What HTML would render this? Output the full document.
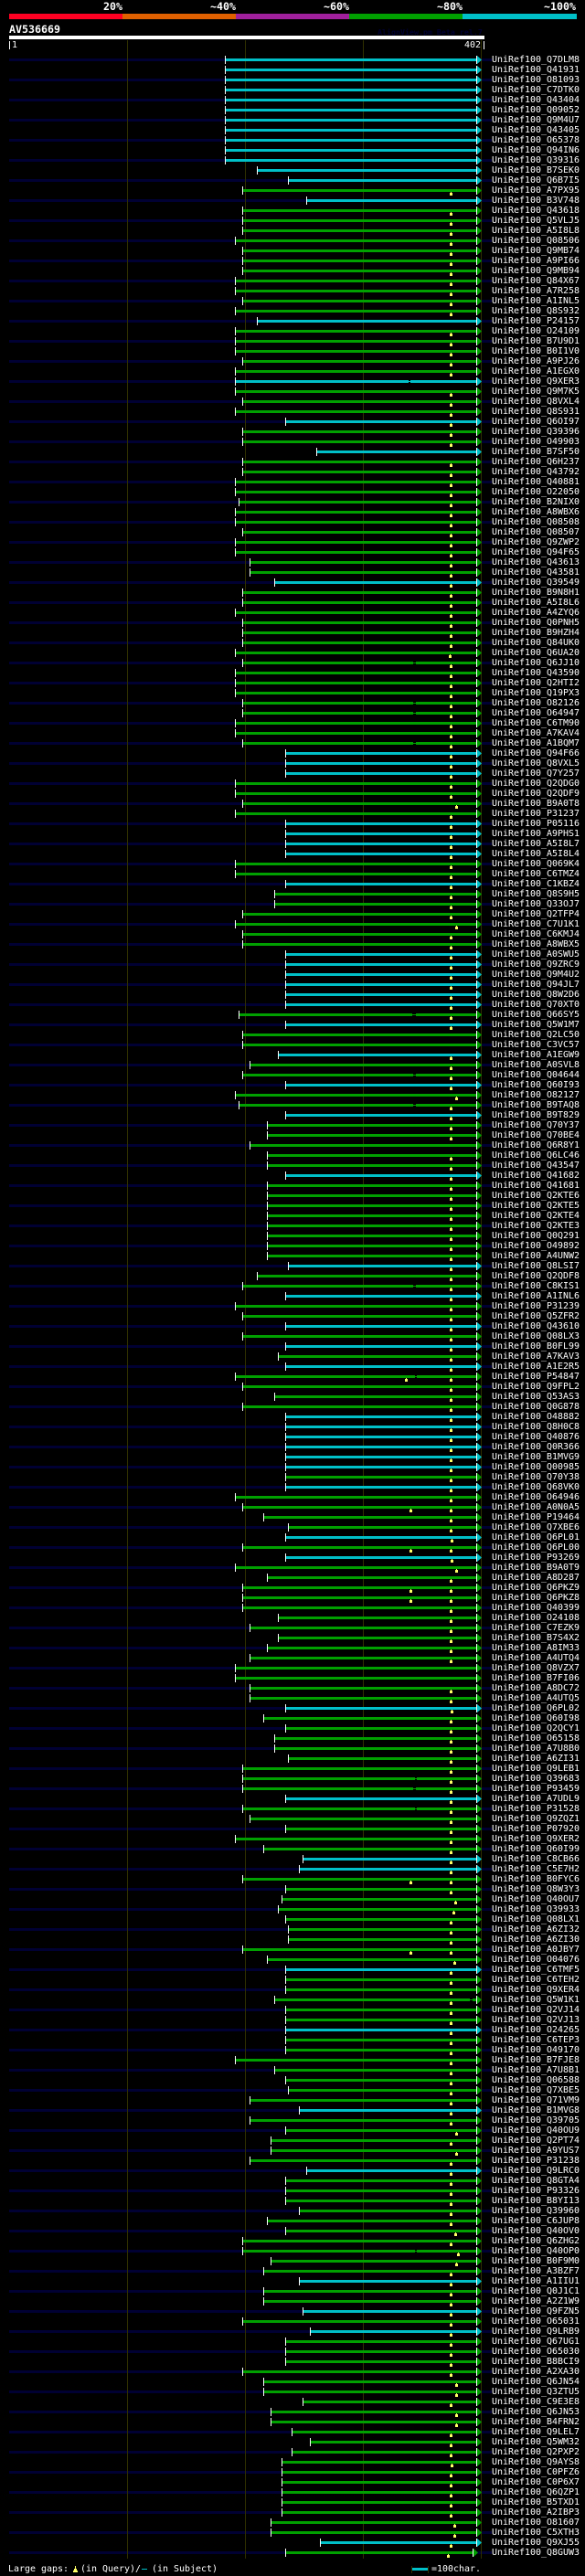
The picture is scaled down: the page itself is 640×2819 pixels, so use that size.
<!DOCTYPE html>
<html><head><meta charset="utf-8"><title>AV536669</title>
<style>
html,body{margin:0;padding:0;background:#000}
body{position:relative;width:640px;height:2819px;overflow:hidden;font-family:"DejaVu Sans Mono","Liberation Mono",monospace;color:#fff}
.x{position:absolute;white-space:pre}
.b1{font-weight:bold;font-size:11.63px;line-height:12px}
.n1{font-size:9.97px;line-height:9px}
.k{position:absolute}
#t{position:absolute;left:0;top:61px;width:640px}
#t p{position:relative;margin:0;height:11px;padding-left:538px;font-size:9.97px;line-height:9px;white-space:pre;box-sizing:border-box}
#t p:nth-child(odd)::before{content:"";position:absolute;left:10px;width:528px;top:3px;height:3px;background:#000033;z-index:0}
#t p::after{content:"";position:absolute;top:0;height:9px;left:calc(var(--s)*1px);width:calc((var(--e,527) - var(--s))*1px);z-index:2;
background:linear-gradient(#fff,#fff) 0 0/1px 100% no-repeat,linear-gradient(#fff,#fff) right 5px top 0/1px 100% no-repeat,var(--c);
clip-path:polygon(0 0,1px 0,1px 3px,calc(100% - 6px) 3px,calc(100% - 6px) 0,calc(100% - 5px) 0,100% 4.5px,calc(100% - 5px) 9px,calc(100% - 6px) 9px,calc(100% - 6px) 6px,1px 6px,1px 9px,0 9px)}
.g{--c:#00a000}.c{--c:#00c0c8}
.s246{--s:246}.s257{--s:257}.s261{--s:261}.s265{--s:265}.s273{--s:273}.s281{--s:281}.s288{--s:288}.s292{--s:292}.s296{--s:296}.s300{--s:300}.s304{--s:304}.s308{--s:308}.s312{--s:312}.s315{--s:315}.s319{--s:319}.s327{--s:327}.s331{--s:331}.s335{--s:335}.s339{--s:339}.s346{--s:346}.s350{--s:350}
#t i{position:absolute;left:492px;top:6px;width:3px;height:4px;background:#ffff66;z-index:3;clip-path:polygon(1px 0,2px 0,2px 1px,3px 1px,3px 4px,0 4px,0 1px,1px 1px)}
#t u{position:absolute;left:452px;top:3px;width:3px;height:3px;z-index:3;background:linear-gradient(#000 33%,var(--c) 33% 66%,#000 66%)}
</style></head>
<body>
<div class="x b1" style="left:113px;top:1px">20%</div>
<div class="x b1" style="left:230px;top:1px">~40%</div>
<div class="x b1" style="left:354px;top:1px">~60%</div>
<div class="x b1" style="left:478px;top:1px">~80%</div>
<div class="x b1" style="left:595px;top:1px">~100%</div>
<div class="k" style="left:10px;top:15px;width:124px;height:6px;background:#ff0022"></div>
<div class="k" style="left:134px;top:15px;width:124px;height:6px;background:#e06000"></div>
<div class="k" style="left:258px;top:15px;width:124px;height:6px;background:#a0209c"></div>
<div class="k" style="left:382px;top:15px;width:124px;height:6px;background:#00a000"></div>
<div class="k" style="left:506px;top:15px;width:125px;height:6px;background:#00c0c8"></div>
<div class="x b1" style="left:10px;top:26px">AV536669</div>
<div class="x" style="left:413px;top:30px;font-size:8.3px;line-height:10px;font-weight:bold;color:#000033">AlignView.pm Beta rel.7</div>
<div class="k" style="left:10px;top:39px;width:520px;height:4px;background:#fff"></div>
<div class="k" style="left:10px;top:45px;width:1px;height:9px;background:#fff"></div>
<div class="x n1" style="left:13px;top:45px">1</div>
<div class="x n1" style="left:508px;top:45px">402</div>
<div class="k" style="left:529px;top:45px;width:1px;height:9px;background:#fff"></div>
<div class="k" style="left:139px;top:44px;width:1px;height:2756px;background:#303000;z-index:1"></div>
<div class="k" style="left:268px;top:44px;width:1px;height:2756px;background:#303000;z-index:1"></div>
<div class="k" style="left:397px;top:44px;width:1px;height:2756px;background:#303000;z-index:1"></div>
<div class="k" style="left:526px;top:44px;width:1px;height:2756px;background:#303000;z-index:1"></div>
<div id="t">
<p class="c s246">UniRef100_Q7DLM8</p>
<p class="c s246">UniRef100_Q41931</p>
<p class="c s246">UniRef100_O81093</p>
<p class="c s246">UniRef100_C7DTK0</p>
<p class="c s246">UniRef100_Q43404</p>
<p class="c s246">UniRef100_Q09052</p>
<p class="c s246">UniRef100_Q9M4U7</p>
<p class="c s246">UniRef100_Q43405</p>
<p class="c s246">UniRef100_O65378</p>
<p class="c s246">UniRef100_Q94IN6</p>
<p class="c s246">UniRef100_Q39316</p>
<p class="c s281">UniRef100_B7SEK0</p>
<p class="c s315">UniRef100_Q6B7I5</p>
<p class="g s265">UniRef100_A7PX95<i></i></p>
<p class="c s335">UniRef100_B3V748</p>
<p class="g s265">UniRef100_Q43618<i></i></p>
<p class="g s265">UniRef100_Q5VLJ5<i></i></p>
<p class="g s265">UniRef100_A5I8L8<i></i></p>
<p class="g s257">UniRef100_Q08506<i></i></p>
<p class="g s265">UniRef100_Q9MB74<i></i></p>
<p class="g s265">UniRef100_A9PI66<i></i></p>
<p class="g s265">UniRef100_Q9MB94<i></i></p>
<p class="g s257">UniRef100_Q84X67<i></i></p>
<p class="g s257">UniRef100_A7R258<i></i></p>
<p class="g s265">UniRef100_A1INL5<i></i></p>
<p class="g s257">UniRef100_Q8S932<i></i></p>
<p class="c s281">UniRef100_P24157</p>
<p class="g s257">UniRef100_O24109<i></i></p>
<p class="g s257">UniRef100_B7U9D1<i></i></p>
<p class="g s257">UniRef100_B0I1V0<i></i></p>
<p class="g s265">UniRef100_A9PJ26<i></i></p>
<p class="g s257">UniRef100_A1EGX0<i></i></p>
<p class="c s257">UniRef100_Q9XER3<u style="left:447px;width:2px"></u></p>
<p class="g s257">UniRef100_Q9M7K5<i></i></p>
<p class="g s265">UniRef100_Q8VXL4<i></i></p>
<p class="g s257">UniRef100_Q8S931<i></i></p>
<p class="c s312">UniRef100_Q6OI97<i></i></p>
<p class="g s265">UniRef100_Q39396<i></i></p>
<p class="g s265">UniRef100_O49903<i></i></p>
<p class="c s346">UniRef100_B7SF50</p>
<p class="g s265">UniRef100_Q6H237<i></i></p>
<p class="g s265">UniRef100_Q43792<i></i></p>
<p class="g s257">UniRef100_Q40881<i></i></p>
<p class="g s257">UniRef100_O22050<i></i></p>
<p class="g s261">UniRef100_B2NIX0<i></i></p>
<p class="g s257">UniRef100_A8WBX6<i></i></p>
<p class="g s257">UniRef100_Q08508<i></i></p>
<p class="g s265">UniRef100_Q08507<i></i></p>
<p class="g s257">UniRef100_Q9ZWP2<i></i></p>
<p class="g s257">UniRef100_Q94F65<i></i></p>
<p class="g s273">UniRef100_Q43613<i></i></p>
<p class="g s273">UniRef100_Q43581<i></i></p>
<p class="c s300">UniRef100_Q39549<i></i></p>
<p class="g s265">UniRef100_B9N8H1<i></i></p>
<p class="g s265">UniRef100_A5I8L6<i></i></p>
<p class="g s257">UniRef100_A4ZYQ6<i></i></p>
<p class="g s265">UniRef100_Q0PNH5<i></i></p>
<p class="g s265">UniRef100_B9HZH4<i></i></p>
<p class="g s265">UniRef100_Q84UK0<i></i></p>
<p class="g s257">UniRef100_Q6UA20<i style="left:491px"></i></p>
<p class="g s265">UniRef100_Q6JJ10<i></i><u></u></p>
<p class="g s257">UniRef100_Q43590<i></i></p>
<p class="g s257">UniRef100_Q2HTI2<i></i></p>
<p class="g s257">UniRef100_Q19PX3<i></i></p>
<p class="g s265">UniRef100_O82126<i></i><u></u></p>
<p class="g s265">UniRef100_O64947<i></i><u></u></p>
<p class="g s257">UniRef100_C6TM90<i></i></p>
<p class="g s257">UniRef100_A7KAV4<i></i></p>
<p class="g s265">UniRef100_A1BQM7<i></i><u></u></p>
<p class="c s312">UniRef100_Q94F66<i></i></p>
<p class="c s312">UniRef100_Q8VXL5<i></i></p>
<p class="c s312">UniRef100_Q7Y257<i></i></p>
<p class="g s257">UniRef100_Q2QDG0<i></i></p>
<p class="g s257">UniRef100_Q2QDF9<i></i></p>
<p class="g s265">UniRef100_B9A0T8<i style="left:498px"></i></p>
<p class="g s257">UniRef100_P31237<i></i></p>
<p class="c s312">UniRef100_P05116<i></i></p>
<p class="c s312">UniRef100_A9PHS1<i></i></p>
<p class="c s312">UniRef100_A5I8L7<i></i></p>
<p class="c s312">UniRef100_A5I8L4<i></i></p>
<p class="g s257">UniRef100_Q069K4<i></i></p>
<p class="g s257">UniRef100_C6TMZ4<i></i></p>
<p class="c s312">UniRef100_C1KBZ4<i></i></p>
<p class="g s300">UniRef100_Q8S9H5<i></i></p>
<p class="g s300">UniRef100_Q33OJ7<i></i></p>
<p class="g s265">UniRef100_Q2TFP4<i></i></p>
<p class="g s257">UniRef100_C7U1K1<i style="left:498px"></i></p>
<p class="g s265">UniRef100_C6KMJ4<i></i></p>
<p class="g s265">UniRef100_A8WBX5<i></i></p>
<p class="c s312">UniRef100_A0SWU5<i></i></p>
<p class="c s312">UniRef100_Q9ZRC9<i></i></p>
<p class="c s312">UniRef100_Q9M4U2<i></i></p>
<p class="c s312">UniRef100_Q94JL7<i></i></p>
<p class="c s312">UniRef100_Q8W2D6<i></i></p>
<p class="c s312">UniRef100_Q70XT0<i></i></p>
<p class="g s261">UniRef100_Q66SY5<i></i><u style="left:451px;width:4px"></u></p>
<p class="c s312">UniRef100_Q5W1M7<i></i></p>
<p class="g s265">UniRef100_Q2LC50</p>
<p class="g s265">UniRef100_C3VC57</p>
<p class="c s304">UniRef100_A1EGW9<i></i></p>
<p class="g s273">UniRef100_A0SVL8<i></i></p>
<p class="g s265">UniRef100_Q04644<i></i><u></u></p>
<p class="c s312">UniRef100_Q60I93<i></i></p>
<p class="g s257">UniRef100_O82127<i style="left:498px"></i></p>
<p class="g s261">UniRef100_B9TAQ8<i></i><u></u></p>
<p class="c s312">UniRef100_B9T829<i></i></p>
<p class="g s292">UniRef100_Q70Y37<i></i></p>
<p class="g s292">UniRef100_Q70BE4<i></i></p>
<p class="g s273">UniRef100_Q6R8Y1</p>
<p class="g s292">UniRef100_Q6LC46<i></i></p>
<p class="g s292">UniRef100_Q43547<i></i></p>
<p class="c s312">UniRef100_Q41682<i></i></p>
<p class="g s292">UniRef100_Q41681<i></i></p>
<p class="g s292">UniRef100_Q2KTE6<i></i></p>
<p class="g s292">UniRef100_Q2KTE5<i></i></p>
<p class="g s292">UniRef100_Q2KTE4<i></i></p>
<p class="g s292">UniRef100_Q2KTE3<i></i></p>
<p class="g s292">UniRef100_Q0Q291<i></i></p>
<p class="g s292">UniRef100_O49892<i></i></p>
<p class="g s292">UniRef100_A4UNW2<i></i></p>
<p class="c s315">UniRef100_Q8LSI7<i></i></p>
<p class="g s281">UniRef100_Q2QDF8<i></i></p>
<p class="g s265">UniRef100_C8KIS1<i></i><u></u></p>
<p class="c s312">UniRef100_A1INL6<i></i></p>
<p class="g s257">UniRef100_P31239<i></i></p>
<p class="g s265">UniRef100_Q5ZFR2<i></i></p>
<p class="c s312">UniRef100_Q43610<i></i></p>
<p class="g s265">UniRef100_Q08LX3<i></i></p>
<p class="c s312">UniRef100_B0FL99<i></i></p>
<p class="g s304">UniRef100_A7KAV3<i></i></p>
<p class="c s312">UniRef100_A1E2R5<i></i></p>
<p class="g s257">UniRef100_P54847<i></i><i style="left:443px"></i><u style="left:454px;width:2px"></u></p>
<p class="g s265">UniRef100_Q9FPL2<i></i></p>
<p class="g s300">UniRef100_Q53AS3<i></i></p>
<p class="g s265">UniRef100_Q0G878<i></i></p>
<p class="c s312">UniRef100_O48882<i></i></p>
<p class="c s312">UniRef100_Q8H0C8<i></i></p>
<p class="c s312">UniRef100_Q40876<i></i></p>
<p class="c s312">UniRef100_Q0R366<i></i></p>
<p class="c s312">UniRef100_B1MVG9<i></i></p>
<p class="c s312">UniRef100_Q00985<i></i></p>
<p class="g s312">UniRef100_Q70Y38<i></i></p>
<p class="c s312">UniRef100_Q68VK0<i></i></p>
<p class="g s257">UniRef100_O64946<i></i></p>
<p class="g s265">UniRef100_A0N0A5<i></i><i style="left:448px"></i></p>
<p class="g s288">UniRef100_P19464<i></i></p>
<p class="g s315">UniRef100_Q7XBE6<i></i></p>
<p class="c s312">UniRef100_Q6PL01<i style="left:493px"></i></p>
<p class="g s265">UniRef100_Q6PL00<i></i><i style="left:448px"></i></p>
<p class="c s312">UniRef100_P93269<i style="left:493px"></i></p>
<p class="g s257">UniRef100_B9A0T9<i style="left:498px"></i></p>
<p class="g s292">UniRef100_A8D287<i></i></p>
<p class="g s265">UniRef100_Q6PKZ9<i></i><i style="left:448px"></i></p>
<p class="g s265">UniRef100_Q6PKZ8<i></i><i style="left:448px"></i></p>
<p class="g s265">UniRef100_Q40399<i></i></p>
<p class="g s304">UniRef100_O24108<i></i></p>
<p class="g s273">UniRef100_C7EZK9<i></i></p>
<p class="g s304">UniRef100_B7S4X2<i></i></p>
<p class="g s292">UniRef100_A8IM33<i></i></p>
<p class="g s273">UniRef100_A4UTQ4<i></i></p>
<p class="g s257">UniRef100_Q8VZX7</p>
<p class="g s257">UniRef100_B7FI06</p>
<p class="g s273">UniRef100_A8DC72<i></i></p>
<p class="g s273">UniRef100_A4UTQ5<i></i></p>
<p class="c s312">UniRef100_Q6PL02<i style="left:493px"></i></p>
<p class="g s288">UniRef100_Q60I98<i></i></p>
<p class="g s312">UniRef100_Q2QCY1<i></i></p>
<p class="g s300">UniRef100_O65158<i></i></p>
<p class="g s300">UniRef100_A7U8B0<i></i></p>
<p class="g s315">UniRef100_A6ZI31<i></i></p>
<p class="g s265">UniRef100_Q9LEB1<i></i></p>
<p class="g s265">UniRef100_Q39683<i></i><u style="left:454px;width:2px"></u></p>
<p class="g s265">UniRef100_P93459<i></i><u></u></p>
<p class="c s312">UniRef100_A7UDL9<i></i></p>
<p class="g s265">UniRef100_P31528<i></i><u style="left:454px;width:2px"></u></p>
<p class="g s273">UniRef100_Q9ZQZ1<i></i></p>
<p class="g s312">UniRef100_P07920<i></i></p>
<p class="g s257">UniRef100_Q9XER2<i></i></p>
<p class="g s288">UniRef100_Q60I99<i></i></p>
<p class="c s331">UniRef100_C8CB66<i></i></p>
<p class="c s327">UniRef100_C5E7H2<i></i></p>
<p class="g s265">UniRef100_B0FYC6<i></i><i style="left:448px"></i></p>
<p class="g s312">UniRef100_Q8W3Y3<i></i></p>
<p class="g s308">UniRef100_Q40OU7<i style="left:497px"></i></p>
<p class="g s304">UniRef100_Q39933<i style="left:495px"></i></p>
<p class="g s312">UniRef100_Q08LX1<i></i></p>
<p class="g s315">UniRef100_A6ZI32<i></i></p>
<p class="g s315">UniRef100_A6ZI30<i></i></p>
<p class="g s265">UniRef100_A0JBY7<i></i><i style="left:448px"></i></p>
<p class="g s292">UniRef100_O04076<i style="left:496px"></i></p>
<p class="c s312">UniRef100_C6TMF5<i></i></p>
<p class="g s312">UniRef100_C6TEH2<i></i></p>
<p class="g s312">UniRef100_Q9XER4<i></i></p>
<p class="g s300">UniRef100_Q5W1K1<i></i><u style="left:514px"></u></p>
<p class="g s312">UniRef100_Q2VJ14<i></i></p>
<p class="g s312">UniRef100_Q2VJ13<i></i></p>
<p class="c s312">UniRef100_O24265<i></i></p>
<p class="g s312">UniRef100_C6TEP3<i></i></p>
<p class="g s312">UniRef100_O49170<i></i></p>
<p class="g s257">UniRef100_B7FJE8<i></i></p>
<p class="g s300">UniRef100_A7U8B1<i></i></p>
<p class="g s312">UniRef100_Q06588<i></i></p>
<p class="g s315">UniRef100_Q7XBE5<i></i></p>
<p class="g s273">UniRef100_Q71VM9<i></i></p>
<p class="c s327">UniRef100_B1MVG8<i></i></p>
<p class="g s273">UniRef100_Q39705<i></i></p>
<p class="g s312">UniRef100_Q40OU9<i style="left:498px"></i></p>
<p class="g s296">UniRef100_Q2PT74<i></i></p>
<p class="g s296">UniRef100_A9YUS7<i style="left:498px"></i></p>
<p class="g s273">UniRef100_P31238<i></i></p>
<p class="c s335">UniRef100_Q9LRC0<i></i></p>
<p class="g s312">UniRef100_Q8GTA4<i></i></p>
<p class="g s312">UniRef100_P93326<i></i></p>
<p class="g s312">UniRef100_B8YI13<i></i></p>
<p class="g s327">UniRef100_Q39960<i></i></p>
<p class="g s292">UniRef100_C6JUP8<i></i></p>
<p class="g s312">UniRef100_Q40OV0<i style="left:497px"></i></p>
<p class="g s265">UniRef100_Q6ZHG2<i></i></p>
<p class="g s265">UniRef100_Q40OP0<i style="left:500px"></i><u style="left:454px;width:2px"></u></p>
<p class="g s296">UniRef100_B0F9M0<i style="left:498px"></i></p>
<p class="g s288">UniRef100_A3BZF7<i></i></p>
<p class="c s327">UniRef100_A1IIU1<i></i></p>
<p class="g s288">UniRef100_Q0J1C1<i></i></p>
<p class="g s288">UniRef100_A2Z1W9<i></i></p>
<p class="c s331">UniRef100_Q9FZN5<i></i></p>
<p class="g s265">UniRef100_O65031<i></i></p>
<p class="c s339">UniRef100_Q9LRB9<i></i></p>
<p class="g s312">UniRef100_Q67UG1<i></i></p>
<p class="g s312">UniRef100_O65030<i></i></p>
<p class="g s312">UniRef100_B8BCI9<i></i></p>
<p class="g s265">UniRef100_A2XA30<i></i></p>
<p class="g s288">UniRef100_Q6JN54<i style="left:498px"></i></p>
<p class="g s288">UniRef100_Q3ZTU5<i style="left:498px"></i></p>
<p class="g s331">UniRef100_C9E3E8<i></i></p>
<p class="g s296">UniRef100_Q6JN53<i style="left:498px"></i></p>
<p class="g s296">UniRef100_B4FRN2<i style="left:498px"></i></p>
<p class="g s319">UniRef100_Q9LEL7<i></i></p>
<p class="g s339">UniRef100_Q5WM32<i></i></p>
<p class="g s319">UniRef100_Q2PXP2<i></i></p>
<p class="g s308">UniRef100_Q9AYS8<i style="left:493px"></i></p>
<p class="g s308">UniRef100_C0PFZ6<i></i></p>
<p class="g s308">UniRef100_C0P6X7<i></i></p>
<p class="g s308">UniRef100_Q6QZP1<i></i></p>
<p class="g s308">UniRef100_B5TXD1<i></i></p>
<p class="g s308">UniRef100_A2IBP3<i></i></p>
<p class="g s296">UniRef100_O81607<i style="left:496px"></i></p>
<p class="g s296">UniRef100_C5XTH3<i style="left:496px"></i></p>
<p class="c s350">UniRef100_Q9XJ55<i></i></p>
<p class="g s312" style="--e:523">UniRef100_Q8GUW3<i style="left:489px"></i></p>
</div>
<div class="x n1" style="left:9px;top:2807px">Large gaps:</div>
<div class="k" style="left:80px;top:2808px;width:5px;height:7px;background:#ffff66;clip-path:polygon(2px 0,3px 0,3px 3px,4px 3px,4px 5px,5px 5px,5px 7px,0 7px,0 5px,1px 5px,1px 3px,2px 3px)"></div>
<div class="x n1" style="left:88px;top:2807px">(in Query)/</div>
<div class="k" style="left:155px;top:2811px;width:6px;height:1px;background:#00c0c8"></div>
<div class="x n1" style="left:166px;top:2807px">(in Subject)</div>
<div class="k" style="left:450px;top:2808px;width:1px;height:8px;background:#303000"></div>
<div class="k" style="left:468px;top:2808px;width:1px;height:8px;background:#303000"></div>
<div class="k" style="left:451px;top:2810px;width:17px;height:3px;background:#00c0c8"></div>
<div class="x n1" style="left:472px;top:2807px">=100char.</div>
</body></html>
